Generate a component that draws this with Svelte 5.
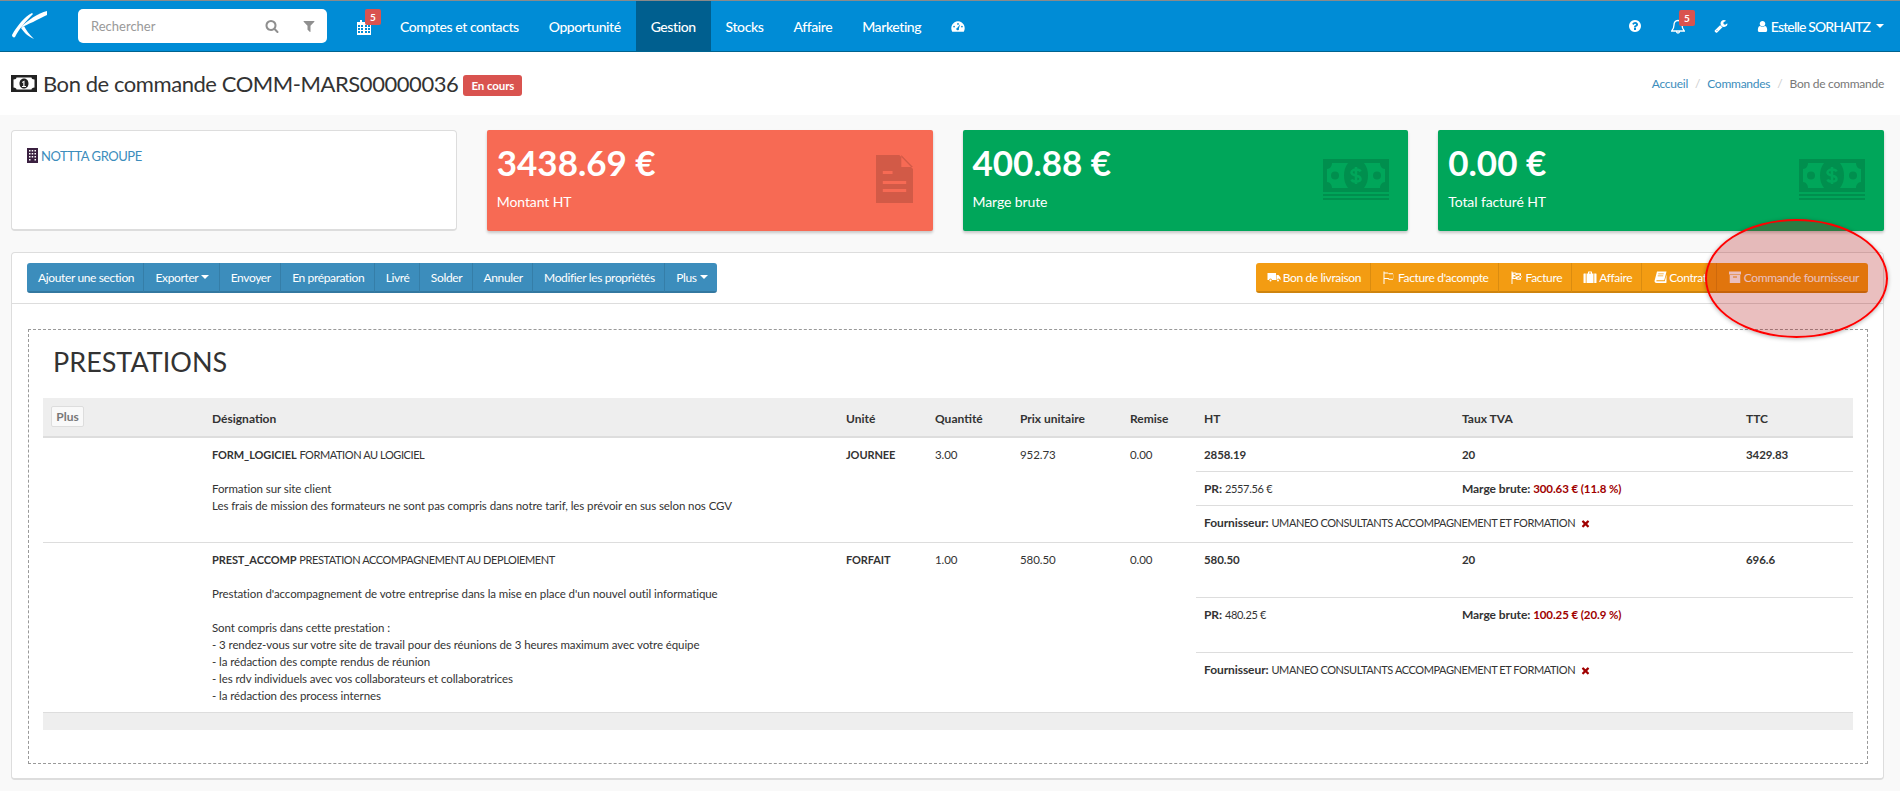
<script>
  const I = {
    search: "M1216 832q0-185-131.5-316.5t-316.5-131.5-316.5 131.5-131.5 316.5 131.5 316.5 316.5 131.5 316.5-131.5 131.5-316.5zm512 832q0 52-38 90t-90 38q-54 0-90-38l-343-342q-179 124-399 124-143 0-273.5-55.5t-225-150-150-225-55.5-273.5 55.5-273.5 150-225 225-150 273.5-55.5 273.5 55.5 225 150 150 225 55.5 273.5q0 220-124 399l343 343q37 37 37 90z",
    filter: "M1595 295q17 41-14 70l-493 493v742q0 42-39 59-13 5-25 5-27 0-45-19l-256-256q-19-19-19-45v-486l-493-493q-31-29-14-70 17-39 59-39h1280q42 0 59 39z",
    user: "M1536 1399q0 109-62.5 187t-150.5 78h-854q-88 0-150.5-78t-62.5-187q0-85 8.5-160.5t31.5-152 58.5-131 94-89 134.5-34.5q131 128 313 128t313-128q76 0 134.5 34.5t94 89 58.5 131 31.5 152 8.5 160.5zm-256-887q0 159-112.5 271.5t-271.5 112.5-271.5-112.5-112.5-271.5 112.5-271.5 271.5-112.5 271.5 112.5 112.5 271.5z",
    help: "M1024 1376v-192q0-14-9-23t-23-9h-192q-14 0-23 9t-9 23v192q0 14 9 23t23 9h192q14 0 23-9t9-23zm256-672q0-88-55.5-163t-138.5-116-170-41q-243 0-371 213-15 24 8 42l132 100q7 6 19 6 16 0 25-12 53-68 86-92 34-24 86-24 48 0 85.5 26t37.5 59q0 38-20 61t-68 45q-63 28-115.5 86.5t-52.5 125.5v36q0 14 9 23t23 9h192q14 0 23-9t9-23q0-19 21.5-49.5t54.5-49.5q32-18 49-28.5t46-35 44.5-48 28-60.5 12.5-81zm384 192q0 209-103 385.5t-279.5 279.5-385.5 103-385.5-103-279.5-279.5-103-385.5 103-385.5 279.5-279.5 385.5-103 385.5 103 279.5 279.5 103 385.5z",
    wrench: "M448 1472q0-26-19-45t-45-19-45 19-19 45 19 45 45 19 45-19 19-45zm644-420l-682 682q-37 37-90 37-52 0-91-37l-106-108q-38-36-38-90 0-53 38-91l681-681q39 98 114.5 173.5t173.5 114.5zm634-435q0 39-23 106-47 134-164.5 217.5t-258.5 83.5q-185 0-316.5-131.5t-131.5-316.5 131.5-316.5 316.5-131.5q58 0 121.5 16.5t107.5 46.5q16 11 16 28t-16 28l-293 169v224l193 107q5-3 79-48.5t135.5-81 70.5-35.5q15 0 23.5 10t8.5 25z",
    times: "M1490 1322q0 40-28 68l-136 136q-28 28-68 28t-68-28l-294-294-294 294q-28 28-68 28t-68-28l-136-136q-28-28-28-68t28-68l294-294-294-294q-28-28-28-68t28-68l136-136q28-28 68-28t68 28l294 294 294-294q28-28 68-28t68 28l136 136q28 28 28 68t-28 68l-294 294 294 294q28 28 28 68z",
    truck: "M64 384h1088v896H640a192 192 0 0 0-384 0H64zM1216 640h256l256 320v320h-64a192 192 0 0 0-384 0h-64zM448 1216a128 128 0 1 1 0 256 128 128 0 0 1 0-256zM1408 1216a128 128 0 1 1 0 256 128 128 0 0 1 0-256z",
    flag: "M192 192h128v128h384q96 0 128 96h576v832H896q-96 0-128-96H320v640H192zM320 448v576h512q64 0 96 96h512V544H928q-64 0-96-96z",
    checker: "M192 192h128v128h384q96 0 128 96h576v832H896q-96 0-128-96H320v640H192zM448 448v192h256V448zM960 576v192h256V576zM704 640v192h256V640zM1216 768v192h256V768zM448 832v192h256V832zM960 960v160h256V960z",
    case: "M640 448V256q0-64 64-64h384q64 0 64 64v192h192v1216H448V448zM768 448h256V320H768zM128 448h224v1216H128q-64 0-64-64V512q0-64 64-64zM1440 448h224q64 0 64 64v1088q0 64-64 64h-224z",
    book: "M512 192h1216l-288 1120H512q-96 0-96 64t96 64h992l224-880v1040l-64 64H448q-256 0-256-224 0-64 32-160zM672 448v96h704v-96zM608 704v96h704v-96z",
    archive: "M128 192h1536v384H128zM224 640h1344v1024H224zM640 832v128h512V832z",
    file: "M288 128h768l448 448v1088H288zM1120 128v384h384zM512 640v96h320v-96zM512 960v96h768V960zM512 1216v96h768v-96z"
  };
  const nav = ["Comptes et contacts", "Opportunité", "Gestion", "Stocks", "Affaire", "Marketing"];
  const blues = ["Ajouter une section", "Exporter", "Envoyer", "En préparation", "Livré", "Solder", "Annuler", "Modifier les propriétés", "Plus"];
  const oranges = [
    ["truck", "Bon de livraison"], ["flag", "Facture d'acompte"], ["checker", "Facture"],
    ["case", "Affaire"], ["book", "Contrat"], ["archive", "Commande fournisseur"]
  ];
  const stats = [
    { v: "3438.69 €", l: "Montant HT", c: "red", icon: "file" },
    { v: "400.88 €", l: "Marge brute", c: "green", icon: "cash" },
    { v: "0.00 €", l: "Total facturé HT", c: "green", icon: "cash" }
  ];
  const head = ["Désignation", "Unité", "Quantité", "Prix unitaire", "Remise", "HT", "Taux TVA", "TTC"];
  const cols = [161, 634, 89, 85, 110, 74, 258, 284, 115];
  const rows = [
    {
      code: "FORM_LOGICIEL", name: "FORMATION AU LOGICIEL",
      lines: ["", "Formation sur site client", "Les frais de mission des formateurs ne sont pas compris dans notre tarif, les prévoir en sus selon nos CGV"],
      unit: "JOURNEE", qty: "3.00", pu: "952.73", rem: "0.00", ht: "2858.19", tva: "20", ttc: "3429.83",
      pr: "2557.56 €", mb: "300.63 € (11.8 %)", h: ["h1", "h2", "h3"]
    },
    {
      code: "PREST_ACCOMP", name: "PRESTATION ACCOMPAGNEMENT AU DEPLOIEMENT",
      lines: ["", "Prestation d'accompagnement de votre entreprise dans la mise en place d'un nouvel outil informatique", "", "Sont compris dans cette prestation :", "- 3 rendez-vous sur votre site de travail pour des réunions de 3 heures maximum avec votre équipe", "- la rédaction des compte rendus de réunion", "- les rdv individuels avec vos collaborateurs et collaboratrices", "- la rédaction des process internes"],
      unit: "FORFAIT", qty: "1.00", pu: "580.50", rem: "0.00", ht: "580.50", tva: "20", ttc: "696.6",
      pr: "480.25 €", mb: "100.25 € (20.9 %)", h: ["h4", "h4", "h5"]
    }
  ];
</script>

{#snippet fa(d, cls)}
  <svg class={cls} viewBox="0 0 1792 1792" aria-hidden="true"><path d={d} fill-rule="evenodd" /></svg>
{/snippet}

{#snippet cash()}
  <svg class="stat-icon cash" viewBox="0 0 66 41" aria-hidden="true">
    <path class="bill" d="M0 0h66v33H0zM0 35h66v2H0zM0 39h66v2H0z" />
    <path class="hole" fill-rule="evenodd" d="M9 4H25C22 8 21 12 21 16.500S22 25 25 29H9C9 26 7 23 4 23V10C7 10 9 7 9 4ZM12 12.500a4 4 0 1 0 0 8 4 4 0 0 0 0-8Z" />
    <path class="hole" fill-rule="evenodd" d="M57 4H41C44 8 45 12 45 16.500S44 25 41 29H57C57 26 59 23 62 23V10C59 10 57 7 57 4ZM54 12.500a4 4 0 1 0 0 8 4 4 0 0 0 0-8Z" />
    <path class="dollar" d="M37.500 12.500C37 11 35 10.500 33 10.500S28.500 11.500 28.500 13.500 31 16 33 16.500 37.500 18 37.500 20 35 22.500 33 22.500 29 22 28.500 20.500M33 8V25" />
  </svg>
{/snippet}

<div class="page">
  <header class="topbar">
    <svg class="logo" viewBox="0 0 36 36" aria-hidden="true">
      <path fill="#fff" d="M20 5C13 8 5 18 0 27C0 29 2 30 3 29C7 21 14 13 21 6Z" />
      <path fill="#fff" d="M35 3C26 5 16 12 8 20C15 17 27 11 35 7Z" />
      <path fill="#fff" d="M9 20C12 24 15 28 22 31C17 26 14 22 12 18Z" />
    </svg>
    <div class="search">
      <span class="placeholder">Rechercher</span>
      {@render fa(I.search, "s-ico")}
      {@render fa(I.filter, "f-ico")}
    </div>
    <nav class="nav">
      <a class="cal" href="#c">
        <svg class="cal-ico" viewBox="0 0 14 15" aria-hidden="true">
          <path fill="#fff" fill-rule="evenodd" d="M3 0h2v2h4V0h2v2h3v13H0V2h3zM1 5v2h2V5zM4 5v2h2V5zM8 5v2h2V5zM11 5v2h2V5zM1 8v2h2V8zM4 8v2h2V8zM8 8v2h2V8zM11 8v2h2V8zM1 11v2h2v-2zM4 11v2h2v-2zM8 11v2h2v-2zM11 11v2h2v-2z" />
        </svg>
        <span class="badge">5</span>
      </a>
      {#each nav as n}
        <a href="#n" class:active={n === "Gestion"}>{n}</a>
      {/each}
      <a href="#d" class="dash">
        <svg viewBox="0 0 16 12" aria-hidden="true"><path fill="#fff" fill-rule="evenodd" d="M8 0a8 8 0 0 1 6.600 12H1.400A8 8 0 0 1 8 0zM3.500 5a1 1 0 1 0 0 2 1 1 0 0 0 0-2zM12.500 5a1 1 0 1 0 0 2 1 1 0 0 0 0-2zM8 2a1 1 0 1 0 0 2 1 1 0 0 0 0-2zM10.500 3.500 7.300 7.400a1.500 1.500 0 1 0 1.700 1z" /></svg>
      </a>
    </nav>
    <div class="right">
      {@render fa(I.help, "t-help")}
      <span class="bell">
        <svg viewBox="0 0 14 15" aria-hidden="true"><path fill="none" stroke="#fff" stroke-width="1.300" d="M7 1.500c-3 0-4 2-4 4.500 0 3-1 4.500-2.300 6h12.600C12 10.500 11 9 11 6c0-2.500-1-4.500-4-4.500zM5.500 12.500c0 2 3 2 3 0" /></svg>
        <span class="badge">5</span>
      </span>
      {@render fa(I.wrench, "t-wrench")}
      <span class="who">
        {@render fa(I.user, "t-user")}
        <span>Estelle SORHAITZ</span>
        <i class="caret"></i>
      </span>
    </div>
  </header>

  <section class="title-bar">
    <h1>
      <svg class="t-money" viewBox="0 0 26 17" aria-hidden="true">
        <path fill="#222" fill-rule="evenodd" d="M0 0h26v17H0zM2.500 4.500v8c2 0 3 1 3 2h15c0-1 1-2 3-2v-8c-2 0-3-1-3-2h-15c0 1-1 2-3 2zM13 3.500c3 0 4.500 2.500 4.500 5s-1.500 5-4.500 5-4.500-2.500-4.500-5 1.500-5 4.500-5zM11 7l2.500-1.500V11H15v1h-4v-1h1.300V7.300L11 8z" />
      </svg>
      Bon de commande COMM-MARS00000036
      <span class="state">En cours</span>
    </h1>
    <ol class="crumbs">
      <li><a href="#a">Accueil</a></li>
      <li class="sep">/</li>
      <li><a href="#b">Commandes</a></li>
      <li class="sep">/</li>
      <li>Bon de commande</li>
    </ol>
  </section>

  <main class="content">
    <div class="cards">
      <div class="client">
        <svg class="bld" viewBox="0 0 11 15" aria-hidden="true">
          <path fill="#3a2040" fill-rule="evenodd" d="M0 0h11v15H0zM2 2v1.500h1.500V2zM4.700 2v1.500h1.500V2zM7.500 2v1.500H9V2zM2 5v1.500h1.500V5zM4.700 5v1.500h1.500V5zM7.500 5v1.500H9V5zM2 8v1.500h1.500V8zM4.700 8v1.500h1.500V8zM7.500 8v1.500H9V8zM2 11v1.500h1.500V11zM7.500 11v1.500H9V11z" />
        </svg>
        <a href="#g">NOTTTA GROUPE</a>
      </div>
      {#each stats as s}
        <div class="stat {s.c}">
          <div class="val">{s.v}</div>
          <div class="lab">{s.l}</div>
          {#if s.icon === "cash"}
            {@render cash()}
          {:else}
            <svg class="stat-icon doc" viewBox="288 128 1216 1536" preserveAspectRatio="none" aria-hidden="true"><path d={I.file} fill-rule="evenodd" /></svg>
          {/if}
        </div>
      {/each}
    </div>

    <section class="panel">
      <div class="toolbar">
        <div class="group blue">
          {#each blues as b}
            <button>{b}{#if b === "Exporter" || b === "Plus"}<i class="caret sm"></i>{/if}</button>
          {/each}
        </div>
        <div class="group orange">
          {#each oranges as o}
            <button>{@render fa(I[o[0]], "b-ico")}{o[1]}</button>
          {/each}
        </div>
      </div>

      <div class="dashed">
        <h2>PRESTATIONS</h2>
        <table>
          <colgroup>
            {#each cols as c}<col style="width:{c}px" />{/each}
          </colgroup>
          <thead>
            <tr>
              <th class="plus-cell"><button class="plus">Plus</button></th>
              {#each head as h}<th>{h}</th>{/each}
            </tr>
          </thead>
          <tbody>
            {#each rows as r}
              <tr class={r.h[0]}>
                <td rowspan="3" class="blank"></td>
                <td rowspan="3"><div><b class="code">{r.code}</b> <span class="caps">{r.name}</span></div>
                  {#each r.lines as l}<div class="ln">{l}</div>{/each}
                </td>
                <td rowspan="3"><b class="code">{r.unit}</b></td>
                <td rowspan="3">{r.qty}</td>
                <td rowspan="3">{r.pu}</td>
                <td rowspan="3">{r.rem}</td>
                <td><b>{r.ht}</b></td>
                <td><b>{r.tva}</b></td>
                <td><b>{r.ttc}</b></td>
              </tr>
              <tr class={r.h[1]}>
                <td><b class="lbl">PR:</b> <span class="pr">{r.pr}</span></td>
                <td colspan="2"><b class="lbl">Marge brute:</b> <b class="neg">{r.mb}</b></td>
              </tr>
              <tr class={r.h[2]}>
                <td colspan="3"><b class="lbl">Fournisseur:</b> <span class="caps">UMANEO CONSULTANTS ACCOMPAGNEMENT ET FORMATION</span> <svg class="x" viewBox="0 0 1792 1792" aria-hidden="true"><path d={I.times} /></svg></td>
              </tr>
            {/each}
          </tbody>
          <tfoot><tr><td colspan="9"></td></tr></tfoot>
        </table>
      </div>
    </section>
  </main>

  <div class="mark"></div>
</div>

<style>
  :global(body) {
    margin: 0;
    background: #f9f9f9;
    font-family: "Lato", "Liberation Sans", sans-serif;
    color: #333;
  }
  .page { position: relative; width: 1900px; height: 791px; overflow: hidden; }
  svg { display: block; fill: currentColor; }
  a { text-decoration: none; color: inherit; }

  .topbar {
    height: 50px;
    display: flex;
    align-items: center;
    background: #008cd6;
    border-top: 1px solid #8a8a8a;
    border-bottom: 1px solid #00638f;
    color: #fff;
  }
  .logo { width: 36px; height: 36px; margin-left: 12px; flex: none; }
  .search {
    margin-left: 30px;
    width: 249px;
    height: 34px;
    background: #fff;
    border-radius: 5px;
    display: flex;
    align-items: center;
    color: #999;
    font-size: 13px;
    box-sizing: border-box;
    padding-left: 13px;
  }
  .placeholder { flex: 1; }
  .s-ico { width: 14px; height: 14px; color: #8f8f8f; margin-right: 23px; }
  .f-ico { width: 14px; height: 14px; color: #8f8f8f; margin-right: 11px; }
  .nav { display: flex; height: 50px; margin-left: 28px; }
  .nav a {
    display: flex;
    align-items: center;
    padding: 0 15px;
    font-size: 14px;
    font-weight: 500;
    letter-spacing: -0.42px;
  }
  .nav a.active { background: #005f8f; }
  .nav .cal { position: relative; padding: 0 0 0 2px; width: 30px; box-sizing: border-box; }
  .cal-ico { width: 14px; height: 15px; margin-top: 2px; }
  .badge {
    position: absolute;
    top: 8px;
    left: 10px;
    width: 16px;
    height: 16px;
    line-height: 16px;
    text-align: center;
    background: #d9534f;
    border-radius: 2px;
    font-size: 10px;
    font-weight: 700;
    letter-spacing: 0;
    color: #fff;
  }
  .dash svg { width: 14px; height: 11px; }
  .right { margin-left: auto; display: flex; align-items: center; padding-right: 16px; }
  .t-help { width: 14px; height: 14px; }
  .bell { position: relative; margin-left: 29px; }
  .bell svg { width: 14px; height: 15px; }
  .bell .badge { top: -9px; left: 8px; }
  .t-wrench { width: 14px; height: 14px; margin-left: 29px; }
  .who { display: flex; align-items: center; margin-left: 28px; font-size: 14px; font-weight: 500; letter-spacing: -0.85px; }
  .t-user { width: 13px; height: 15px; margin-right: 2px; }
  .caret { width: 0; height: 0; margin-left: 6px; border: 4px solid transparent; border-top-color: currentColor; border-bottom: 0; display: inline-block; }
  .caret.sm { margin-left: 3px; }

  .title-bar {
    height: 63px;
    background: #fff;
    display: flex;
    align-items: center;
    justify-content: space-between;
    padding: 0 16px 0 11px;
  }
  h1 { margin: 0; font-size: 22px; font-weight: 400; letter-spacing: -0.44px; display: flex; align-items: center; }
  .t-money { width: 26px; height: 17px; margin-right: 6px; }
  .state {
    margin: 3px 0 0 5px;
    background: #d9534f;
    color: #fff;
    font-size: 11.5px;
    font-weight: 700;
    letter-spacing: -0.1px;
    width: 59px;
    height: 21px;
    line-height: 21px;
    text-align: center;
    border-radius: 3px;
  }
  .crumbs { list-style: none; margin: 0; padding: 0; display: flex; font-size: 12px; letter-spacing: -0.25px; color: #777; }
  .crumbs a { color: #3c8dbc; }
  .sep { color: #ccc; margin: 0 7px; }

  .content { padding: 15px 16px 0 11px; }
  .cards { display: grid; grid-template-columns: repeat(4, 1fr); gap: 30px; height: 101px; }
  .client {
    background: #fff;
    border: 1px solid #ddd;
    border-bottom-width: 2px;
    border-radius: 4px;
    padding: 17px 0 0 15px;
    display: flex;
    align-items: flex-start;
    gap: 3px;
    font-size: 13px;
    box-sizing: border-box;
  }
  .bld { width: 11px; height: 15px; }
  .client a { color: #3c8dbc; letter-spacing: -0.45px; }
  .stat {
    position: relative;
    border-radius: 2px;
    color: #fff;
    box-shadow: 0 2px 3px rgba(0, 0, 0, 0.2);
    padding: 10px;
    box-sizing: border-box;
  }
  .stat.red { background: #f76a54; }
  .stat.green { background: #00a65a; }
  .val { font-size: 35px; font-weight: 700; line-height: 44px; }
  .lab { margin-top: 8px; font-size: 14px; letter-spacing: -0.1px; line-height: 20px; }
  .stat-icon { position: absolute; }
  .doc { right: 20px; top: 25px; width: 37px; height: 48px; color: rgba(0, 0, 0, 0.15); }
  .cash { right: 19px; top: 29px; width: 66px; height: 41px; }
  .bill { fill: #008f4e; }
  .hole { fill: #00a65a; }
  .dollar { fill: none; stroke: #00a65a; stroke-width: 2.500; }

  .panel {
    margin-top: 21px;
    height: 528px;
    box-sizing: border-box;
    background: #fff;
    border: 1px solid #ddd;
    border-bottom-width: 2px;
    border-radius: 4px;
  }
  .toolbar {
    height: 51px;
    box-sizing: border-box;
    border-bottom: 1px solid #ddd;
    padding: 10px 15px 0 15px;
    display: flex;
    justify-content: space-between;
    align-items: flex-start;
  }
  .group { display: flex; height: 30px; border-radius: 3px; overflow: hidden; }
  .group button {
    height: 30px;
    box-sizing: border-box;
    padding: 0 9.3px 0 11px;
    border: 0;
    border-bottom: 2px solid rgba(0, 0, 0, 0.15);
    border-right: 1px solid rgba(0, 0, 0, 0.1);
    background: transparent;
    color: #fff;
    font: inherit;
    font-size: 12px;
    letter-spacing: -0.36px;
    white-space: nowrap;
    display: flex;
    align-items: center;
  }
  .group button:last-child { border-right: 0; }
  .blue { background: #3c8dbc; }
  .orange { background: #f39c12; }
  .orange button { padding: 0 9px 0 11px; }
  .b-ico { width: 14px; height: 14px; margin-right: 2px; }

  .dashed {
    margin: 25px 0 0 16px;
    width: 1840px;
    height: 435px;
    box-sizing: border-box;
    border: 1px dashed #999;
    padding: 0 14px;
  }
  h2 { margin: 0; height: 68px; line-height: 64px; padding-left: 10px; font-size: 27px; font-weight: 400; color: #333; }
  table { table-layout: fixed; border-collapse: separate; border-spacing: 0; width: 1810px; font-size: 11.5px; }
  thead th {
    height: 40px;
    box-sizing: border-box;
    background: #eee;
    border-bottom: 2px solid #ddd;
    padding: 3px 8px 0;
    text-align: left;
    font-size: 12px;
    font-weight: 700;
  }
  th.plus-cell { position: relative; padding: 0; }
  .plus {
    position: absolute;
    left: 8px;
    top: 8px;
    width: 33px;
    height: 21px;
    padding: 0;
    border: 1px solid #ddd;
    border-radius: 2px;
    background: #f9f9f9;
    color: #777;
    font: inherit;
    font-size: 12px;
  }
  td { padding: 8px; vertical-align: top; line-height: 17px; border-bottom: 1px solid #ddd; letter-spacing: -0.08px; }
  .ln { min-height: 17px; }
  .code { font-size: 11px; letter-spacing: -0.1px; }
  .caps { font-size: 11px; letter-spacing: -0.42px; }
  .lbl { font-size: 12px; }
  .pr { font-size: 11px; letter-spacing: -0.3px; }
  .h1 { height: 33px; }
  .h2 { height: 34px; }
  .h3 { height: 37px; }
  .h4 { height: 55px; }
  .h5 { height: 60px; }
  .neg { color: #a00000; }
  .x { display: inline-block; width: 11px; height: 11px; color: #a00000; vertical-align: -2px; margin-left: 2px; }
  tfoot td { background: #eee; height: 17px; padding: 0; border-bottom: 0; }

  .mark {
    position: absolute;
    left: 1705px;
    top: 219px;
    width: 183px;
    height: 119px;
    box-sizing: border-box;
    border: 2px solid #f00;
    border-radius: 50%;
    background: rgba(170, 0, 0, 0.25);
    box-shadow: 0 1px 4px rgba(0, 0, 0, 0.3);
  }
</style>
